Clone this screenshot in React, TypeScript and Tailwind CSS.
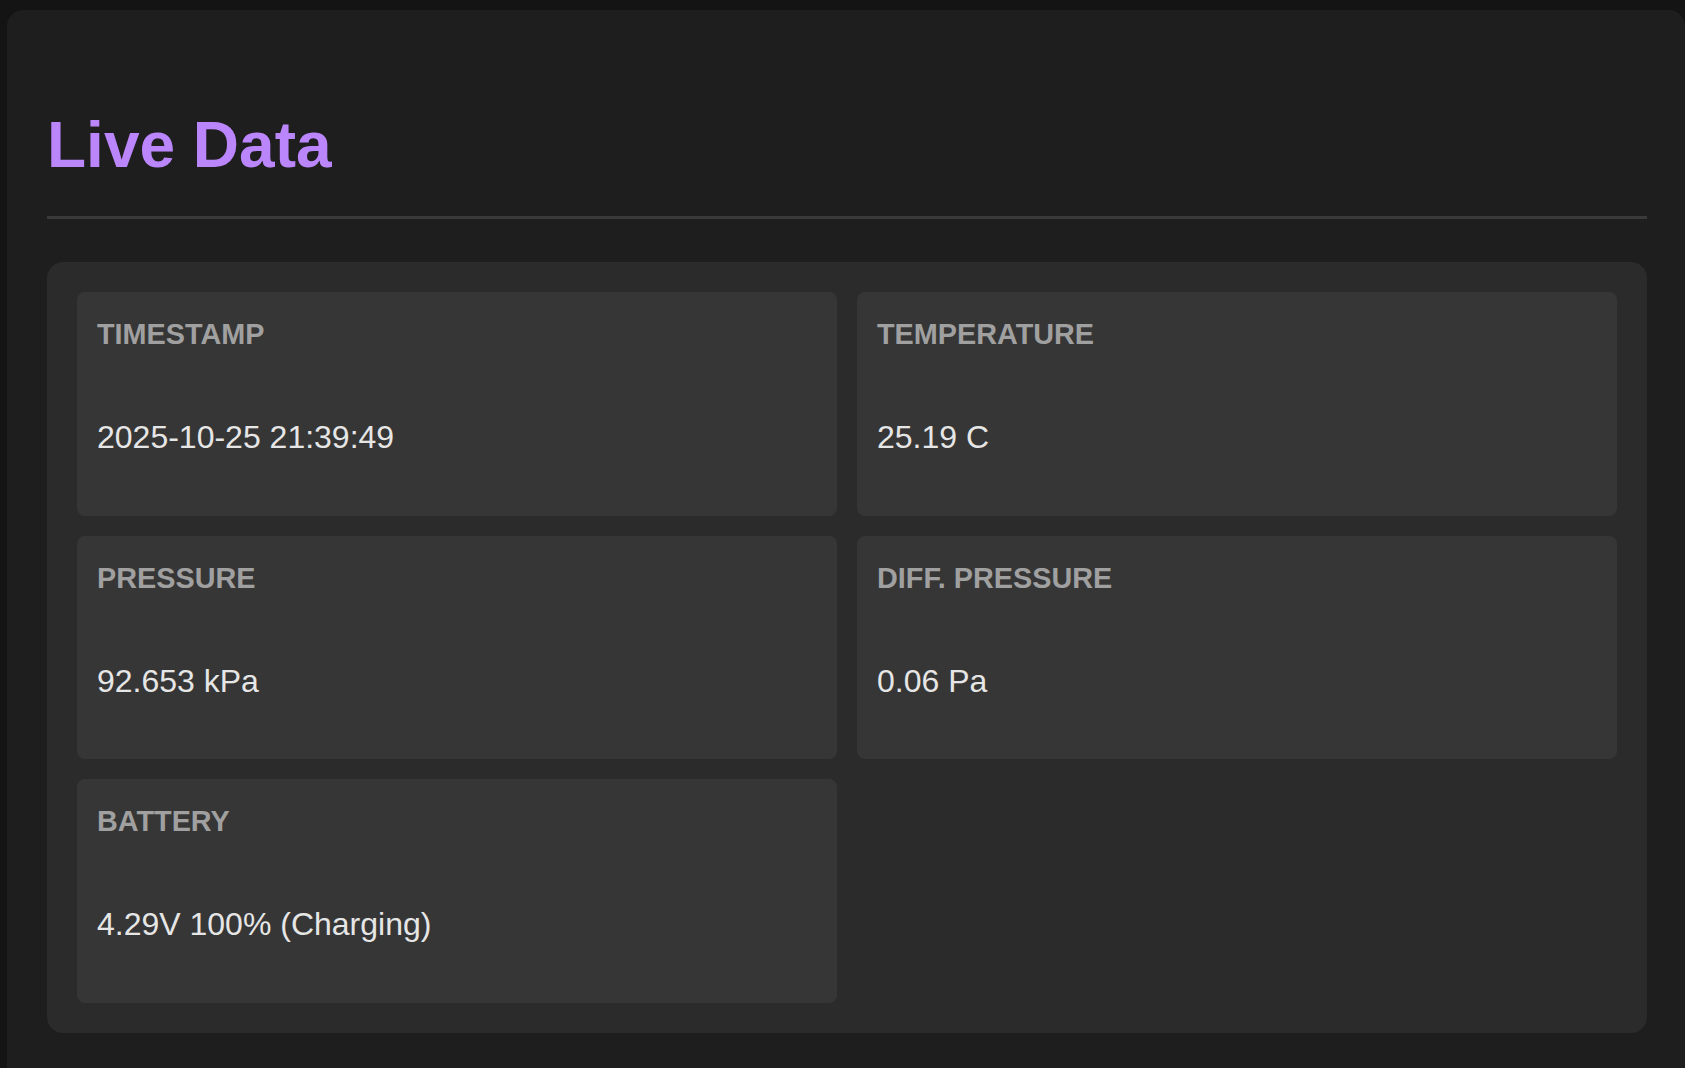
const readings = [
  { label: 'Timestamp', value: '2025-10-25 21:39:49' },
  { label: 'Temperature', value: '25.19 C' },
  { label: 'Pressure', value: '92.653 kPa' },
  { label: 'Diff. Pressure', value: '0.06 Pa' },
  { label: 'Battery', value: '4.29V 100% (Charging)' },
];

const ReadingCard = ({ label, value }: { label: string; value: string }) => (
  <div className="h-[223.5px] rounded-lg bg-[#363636] px-5 pt-[26px]">
    <div className="text-[28.8px] leading-[32px] font-bold uppercase text-[#a0a0a0]">{label}</div>
    <div className="mt-[69px] text-[32px] leading-[37px] text-[#e6e6e6]">{value}</div>
  </div>
);

const App = () => {
  return (
    <div
      className="min-h-screen bg-[#141414] pt-[10px] pl-[7px] overflow-hidden"
      style={{ fontFamily: '"Liberation Sans", Arial, sans-serif' }}
    >
      <div className="min-h-[1058px] rounded-t-2xl bg-[#1e1e1e] pl-10 pr-[38px] pt-[98px]">
        {/* Header */}
        <h1 className="border-b-[3px] border-[#3a3a3a] pb-[34px] text-[64px] leading-[74px] font-bold text-[#bb86fc]">
          Live Data
        </h1>

        {/* Readings */}
        <div className="mt-[43px] grid grid-cols-2 gap-5 rounded-2xl bg-[#2b2b2b] p-[30px]">
          {readings.map((r) => (
            <ReadingCard key={r.label} label={r.label} value={r.value} />
          ))}
        </div>
      </div>
    </div>
  );
};

export default App;
